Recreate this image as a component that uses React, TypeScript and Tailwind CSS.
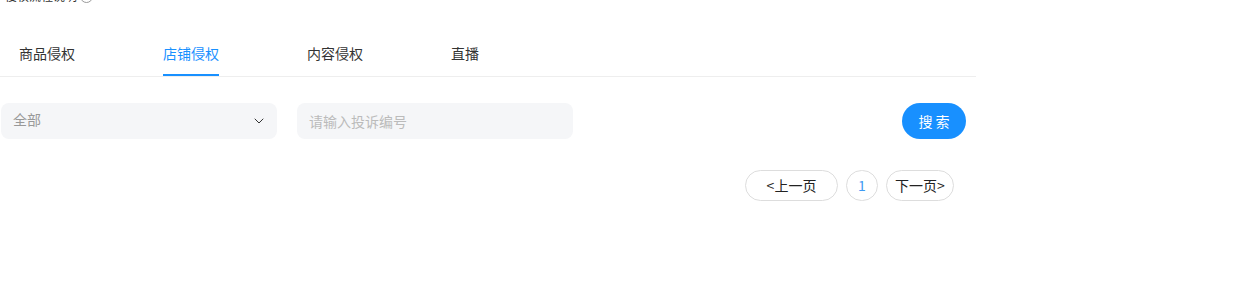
import { ChevronDown } from "lucide-react";

const tabs = ["商品侵权", "店铺侵权", "内容侵权", "直播"];

export default function App() {
  const active = 1;
  return (
    <div
      className="h-[289px] w-[1244px] overflow-hidden bg-white text-[#333]"
      style={{ fontFamily: '"Noto Sans CJK SC", "Noto Sans", sans-serif' }}
    >
      <div className="w-[976px]">
        <div className="-mt-[14px] flex h-[20px] items-center gap-[3px] pl-[5px] text-[12px] leading-[20px] text-[#333]">
          <span>侵权流程说明</span>
          <span className="inline-block h-[13px] w-[13px] rounded-full border border-[#999]" />
        </div>

        <div className="mt-[24px] flex border-b border-[#eee]">
          {tabs.map((t, i) => (
            <div key={t} className="flex w-[144px] flex-col pl-[19px]">
              <div
                className={`flex h-[44px] items-center pt-[2px] text-[14px] ${
                  i === active ? "text-[#1890ff]" : "text-[#333]"
                }`}
              >
                {t}
              </div>
              <div
                className={`h-[2px] w-[56px] ${i === active ? "bg-[#1890ff]" : ""}`}
              />
            </div>
          ))}
        </div>

        <div className="mt-[26px] flex items-center pl-[1px] pr-[10px]">
          <div className="flex h-[36px] w-[276px] items-center justify-between rounded-[8px] bg-[#f5f6f8] pl-[12px] pr-[10px] text-[14px] text-[#999]">
            <span className="-mt-[4px]">全部</span>
            <ChevronDown className="h-[16px] w-[16px] text-[#333]" strokeWidth={1.5} />
          </div>
          <div className="ml-[20px] flex h-[36px] w-[276px] items-center rounded-[8px] bg-[#f5f6f8] pl-[12px] text-[14px] text-[#bbb]">
            请输入投诉编号
          </div>
          <button className="ml-auto h-[36px] w-[64px] rounded-full bg-[#1890ff] text-[14px] text-white">
            搜 索
          </button>
        </div>

        <div className="mt-[31px] flex justify-end gap-[8px] pr-[22px] text-[14px] text-[#222]">
          <button className="h-[31px] w-[93px] rounded-full border border-[#ddd] bg-white">
            &lt;上一页
          </button>
          <button className="h-[31px] w-[32px] rounded-full border border-[#ddd] bg-white text-[#3f9af3]">
            1
          </button>
          <button className="h-[31px] w-[68px] rounded-full border border-[#ddd] bg-white">
            下一页&gt;
          </button>
        </div>
      </div>
    </div>
  );
}
